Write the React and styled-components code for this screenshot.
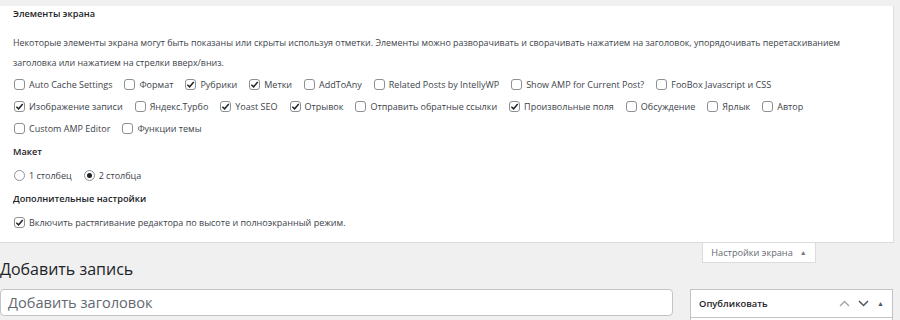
import styled, { createGlobalStyle } from "styled-components";

const GlobalStyle = createGlobalStyle`
  body {
    margin: 0;
    background: #f0f0f1;
    font-family: "Open Sans", "Noto Sans", sans-serif;
    color: #3c434a;
  }
`;

const Page = styled.div`
  width: 900px;
  height: 320px;
  overflow: hidden;
`;

const Panel = styled.div`
  width: 880px;
  margin-right: 7px;
  padding: 0 0 9px 13px;
  background: #fff;
  border-right: 1px solid #dcdcde;
  border-bottom: 1px solid #dcdcde;
`;

const Heading = styled.div`
  margin-top: ${(p) => p.$top || 5}px;
  font-size: 9.2px;
  font-weight: 600;
  line-height: 16px;
  color: #1d2327;
`;

const Description = styled.p`
  margin: 11px 0 0;
  font-size: 8.9px;
  line-height: 20px;
  white-space: nowrap;
`;

const OptionRow = styled.div`
  display: flex;
  column-gap: 12px;
  margin-top: ${(p) => p.$top || 0}px;
  padding-left: 1px;
`;

const Option = styled.label`
  display: flex;
  align-items: center;
  gap: 4px;
  height: 22px;
  font-size: 9px;
  white-space: nowrap;
`;

const Box = styled.span`
  width: 11px;
  height: 11px;
  box-sizing: border-box;
  border: 1px solid #8c8f94;
  border-radius: ${(p) => (p.$round ? "50%" : "3px")};
  display: flex;
  align-items: center;
  justify-content: center;
  background: #fff;
`;

const Dot = styled.span`
  width: 5px;
  height: 5px;
  border-radius: 50%;
  background: #1d2327;
`;

const Check = () => (
  <svg width="9" height="9" viewBox="0 0 10 10">
    <path d="M1.5 5.2 L4 7.6 L8.6 2.2" fill="none" stroke="#1d2327" strokeWidth="1.6" />
  </svg>
);

function Checkbox({ label, checked }) {
  return (
    <Option>
      <Box>{checked && <Check />}</Box>
      {label}
    </Option>
  );
}

function Radio({ label, checked }) {
  return (
    <Option>
      <Box $round>{checked && <Dot />}</Box>
      {label}
    </Option>
  );
}

const MetaRow = styled.div`
  display: flex;
  align-items: flex-start;
`;

const Title = styled.h1`
  flex: 1;
  margin: 15px 0 0;
  font-size: 16px;
  font-weight: 400;
  line-height: 23px;
  color: #1d2327;
`;

const Tab = styled.div`
  margin-right: 84px;
  width: 114px;
  height: 20px;
  box-sizing: border-box;
  background: #fff;
  border: 1px solid #dcdcde;
  border-top: none;
  font-size: 9.2px;
  color: #646970;
  display: flex;
  align-items: center;
  justify-content: center;
  gap: 7px;
`;

const Arrow = styled.span`
  font-size: 7px;
  color: ${(p) => p.$color || "#787c82"};
`;

const Main = styled.div`
  display: flex;
  margin-top: 8px;
  gap: 17px;
`;

const TitleInput = styled.div`
  width: 673px;
  height: 27px;
  box-sizing: border-box;
  background: #fff;
  border: 1px solid #c3c4c7;
  border-radius: 4px;
  padding-left: 7px;
  font-size: 14.6px;
  line-height: 25px;
  color: #646970;
`;

const Postbox = styled.div`
  width: 203px;
  height: 40px;
  box-sizing: border-box;
  background: #fff;
  border: 1px solid #c3c4c7;
`;

const PostboxHeader = styled.div`
  display: flex;
  align-items: center;
  height: 27px;
  padding: 0 8px;
  border-bottom: 1px solid #c3c4c7;
  font-size: 9.4px;
  font-weight: 600;
  color: #1d2327;
`;

const HeaderTitle = styled.span`
  flex: 1;
`;

const Handles = styled.div`
  display: flex;
  align-items: center;
  gap: 8px;
`;

const Chevron = ({ up, color }) => (
  <svg width="11" height="7" viewBox="0 0 11 7">
    <path d={up ? "M1 6 L5.5 1.5 L10 6" : "M1 1 L5.5 5.5 L10 1"} fill="none" stroke={color} strokeWidth="1.5" />
  </svg>
);

const rows = [
  [
    ["Auto Cache Settings", false],
    ["Формат", false],
    ["Рубрики", true],
    ["Метки", true],
    ["AddToAny", false],
    ["Related Posts by IntellyWP", false],
    ["Show AMP for Current Post?", false],
    ["FooBox Javascript и CSS", false],
  ],
  [
    ["Изображение записи", true],
    ["Яндекс.Турбо", false],
    ["Yoast SEO", true],
    ["Отрывок", true],
    ["Отправить обратные ссылки", false],
    ["Произвольные поля", true],
    ["Обсуждение", false],
    ["Ярлык", false],
    ["Автор", false],
  ],
  [
    ["Custom AMP Editor", false],
    ["Функции темы", false],
  ],
];

export default function App() {
  return (
    <Page>
      <GlobalStyle />
      <Panel>
        <Heading $top={6}>Элементы экрана</Heading>
        <Description>
          Некоторые элементы экрана могут быть показаны или скрыты используя отметки. Элементы можно
          разворачивать и сворачивать нажатием на заголовок, упорядочивать перетаскиванием
          <br />
          заголовка или нажатием на стрелки вверх/вниз.
        </Description>
        {rows.map((row, i) => (
          <OptionRow key={i}>
            {row.map(([label, checked]) => (
              <Checkbox key={label} label={label} checked={checked} />
            ))}
          </OptionRow>
        ))}
        <Heading>Макет</Heading>
        <OptionRow $top={4}>
          <Radio label="1 столбец" />
          <Radio label="2 столбца" checked />
        </OptionRow>
        <Heading>Дополнительные настройки</Heading>
        <OptionRow $top={4}>
          <Checkbox label="Включить растягивание редактора по высоте и полноэкранный режим." checked />
        </OptionRow>
      </Panel>
      <MetaRow>
        <Title>Добавить запись</Title>
        <Tab>
          Настройки экрана <Arrow>▲</Arrow>
        </Tab>
      </MetaRow>
      <Main>
        <TitleInput>Добавить заголовок</TitleInput>
        <Postbox>
          <PostboxHeader>
            <HeaderTitle>Опубликовать</HeaderTitle>
            <Handles>
              <Chevron up color="#a7aaad" />
              <Chevron color="#50575e" />
              <Arrow $color="#50575e">▲</Arrow>
            </Handles>
          </PostboxHeader>
        </Postbox>
      </Main>
    </Page>
  );
}
